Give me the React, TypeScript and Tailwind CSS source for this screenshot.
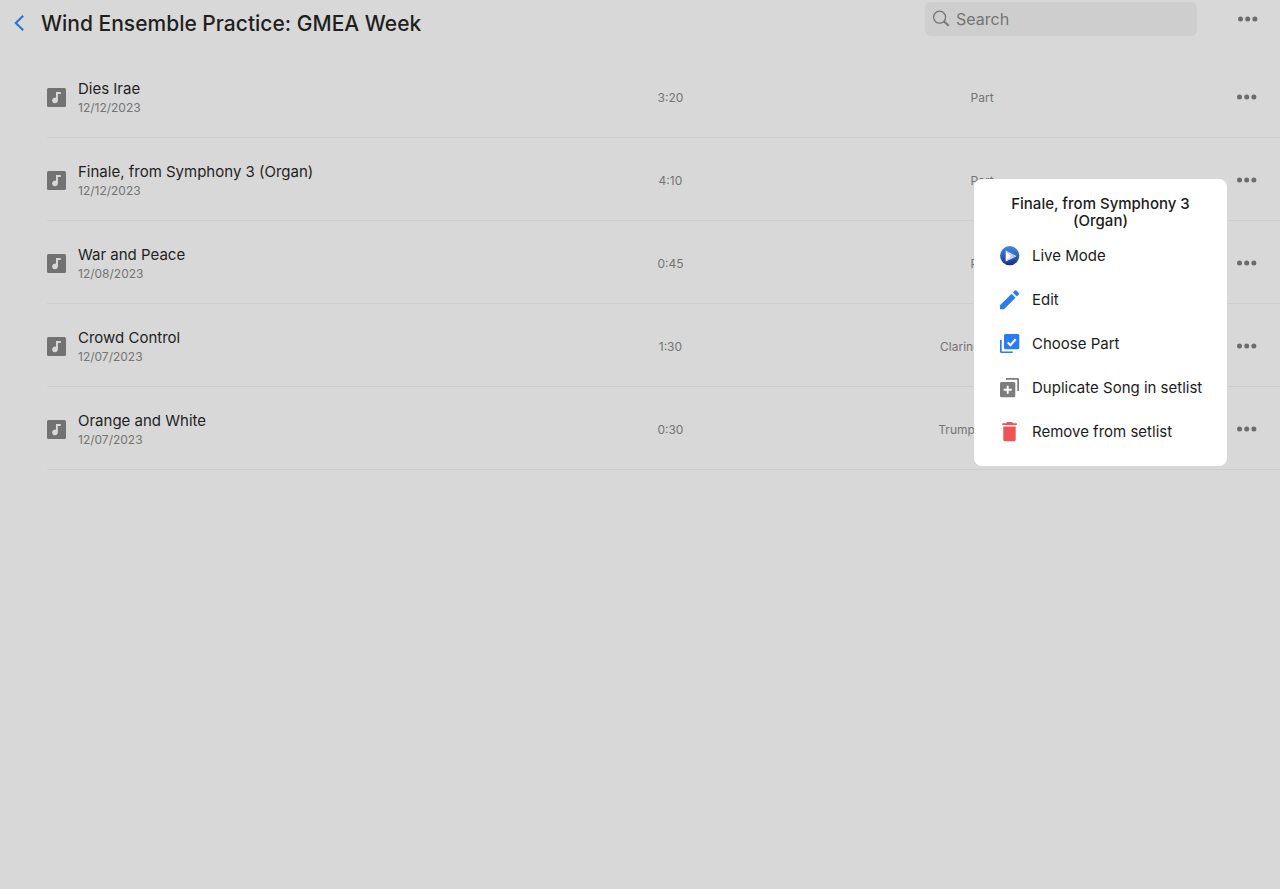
import { useState } from "react";

const songs = [
  { id: 1, title: "Dies Irae", date: "12/12/2023", duration: "3:20", part: "Part" },
  { id: 2, title: "Finale, from Symphony 3 (Organ)", date: "12/12/2023", duration: "4:10", part: "Part" },
  { id: 3, title: "War and Peace", date: "12/08/2023", duration: "0:45", part: "Part" },
  { id: 4, title: "Crowd Control", date: "12/07/2023", duration: "1:30", part: "Clarinet in Bb 1" },
  { id: 5, title: "Orange and White", date: "12/07/2023", duration: "0:30", part: "Trumpet in Bb 1" },
];

function BackIcon() {
  return (
    <svg width="10" height="16" viewBox="0 0 10 16" fill="none" stroke="#2a6fd6" strokeWidth="2">
      <path d="M9.2 0.8 1.8 8l7.4 7.2" />
    </svg>
  );
}

function SearchIcon() {
  return (
    <svg width="18" height="18" viewBox="0 0 18 18" fill="none" stroke="#747474">
      <circle cx="6.6" cy="7.2" r="6" strokeWidth="1.3" />
      <path d="m11 11.4 4.6 4.4" strokeWidth="2" />
    </svg>
  );
}

function DotsIcon() {
  return (
    <svg width="20" height="6" viewBox="0 0 20 6" fill="#6c6c6c">
      <circle cx="2.5" cy="3" r="2.5" />
      <circle cx="9.7" cy="3" r="2.5" />
      <circle cx="16.9" cy="3" r="2.5" />
    </svg>
  );
}

function SongIcon() {
  return (
    <svg className="shrink-0" width="19" height="19" viewBox="0 0 19 19">
      <rect width="19" height="19" rx="1.5" fill="#727272" />
      <path d="M9 4h4.8v2.1h-2.9v6.2a2.9 2.9 0 1 1-1.9-2.6z" fill="#d8d8d8" />
    </svg>
  );
}

function LiveIcon() {
  return (
    <svg width="20" height="20" viewBox="0 0 20 20">
      <defs>
        <linearGradient id="live" x1="0" y1="0" x2="0" y2="1">
          <stop offset="0" stopColor="#4186e6" />
          <stop offset="0.5" stopColor="#3462bd" />
          <stop offset="1" stopColor="#142c88" />
        </linearGradient>
      </defs>
      <circle cx="9.7" cy="9.7" r="9.6" fill="url(#live)" />
      <path d="M5.6 4.9 16 10.2 5.6 15.2z" fill="#8fa9dc" />
      <path d="m5.9 5.2 5.4 5-5.4 4.8z" fill="#fff" />
      <path d="m5.8 5 10 5.2-10 4.9M9 7l3.6 3.2L9 13.2" fill="none" stroke="#fff" strokeWidth="0.7" />
    </svg>
  );
}

function EditIcon() {
  return (
    <svg width="20" height="20" viewBox="0 0 20 20" fill="#2a7df0">
      <path d="M0 15.3 11.6 3.8l3.9 3.9L4 19.3H0z" />
      <path d="m12.9 2.5 1.9-1.9a1.1 1.1 0 0 1 1.6 0L18.8 3a1.1 1.1 0 0 1 0 1.6l-1.9 1.8z" />
    </svg>
  );
}

function ChooseIcon() {
  return (
    <svg width="20" height="20" viewBox="0 0 20 20">
      <path d="M0 6h1.7v11.5h11V19H1.2A1.2 1.2 0 0 1 0 17.8z" fill="#2a7df0" />
      <rect x="4" y="0" width="15.3" height="15.3" rx="1.5" fill="#2a7df0" />
      <path d="m7.7 8.5 2.8 2.7 5.2-6" fill="none" stroke="#fff" strokeWidth="2" />
    </svg>
  );
}

function DuplicateIcon() {
  return (
    <svg width="20" height="20" viewBox="0 0 20 20">
      <path d="M6 0h11.8A1.2 1.2 0 0 1 19 1.2V13h-1.7V1.7H6z" fill="#7d7d7d" />
      <rect x="0" y="4" width="15.3" height="15.3" rx="1.5" fill="#7d7d7d" />
      <path d="M7.7 7.7v8M3.7 11.7h8" fill="none" stroke="#fff" strokeWidth="1.9" />
    </svg>
  );
}

function RemoveIcon() {
  return (
    <svg width="20" height="20" viewBox="0 0 20 20" fill="#ef5353">
      <path d="M2.3 1.2H6L7 0h5l1 1.2h3.8v1.9H2.3z" />
      <path d="M3.3 4.6h12.4v12.8a1.9 1.9 0 0 1-1.9 1.9H5.2a1.9 1.9 0 0 1-1.9-1.9z" />
    </svg>
  );
}

const actions = [
  { label: "Live Mode", icon: <LiveIcon /> },
  { label: "Edit", icon: <EditIcon /> },
  { label: "Choose Part", icon: <ChooseIcon /> },
  { label: "Duplicate Song in setlist", icon: <DuplicateIcon /> },
  { label: "Remove from setlist", icon: <RemoveIcon /> },
];

function SongMenu({ title, onClose }: { title: string; onClose: () => void }) {
  return (
    <div className="absolute top-[41px] right-[53px] z-10 w-[253px] rounded-lg bg-white pt-4 pb-3">
      <h2 className="mb-[5px] px-6 text-center text-[15px] leading-[17px] font-medium text-[#1c1c1c]">{title}</h2>
      {actions.map((action) => (
        <button
          key={action.label}
          className="flex h-11 w-full items-center gap-3 pl-[26px] text-left text-[15px] whitespace-nowrap text-[#1c1c1c]"
          onClick={onClose}
        >
          {action.icon}
          {action.label}
        </button>
      ))}
    </div>
  );
}

export default function App() {
  const [search, setSearch] = useState("");
  const [openId, setOpenId] = useState<number | null>(2);

  const visible = songs.filter((song) => song.title.toLowerCase().includes(search.toLowerCase()));

  return (
    <div className="min-h-screen bg-[#d8d8d8] font-[Inter,sans-serif] text-[#1f1f1f]">
      <header className="flex h-[55px] items-start">
        <button className="flex h-[46px] w-[41px] items-center pl-[14px]" aria-label="Back">
          <BackIcon />
        </button>
        <h1 className="flex-1 text-[21px] leading-[48px] font-medium">Wind Ensemble Practice: GMEA Week</h1>
        <label className="mt-[2px] flex h-[34px] w-[272px] items-center gap-[5px] rounded-md bg-[#cecece] pl-2">
          <SearchIcon />
          <input
            className="min-w-0 flex-1 bg-transparent text-base outline-none placeholder:text-[#747474]"
            aria-label="Search"
            placeholder="Search"
            value={search}
            onChange={(e) => setSearch(e.target.value)}
          />
        </label>
        <button className="mr-[22px] ml-[41px] flex h-[38px] items-center" aria-label="Setlist options">
          <DotsIcon />
        </button>
      </header>
      <ul className="pl-[47px]">
        {visible.map((song) => (
          <li
            key={song.id}
            className="relative grid h-[83px] grid-cols-[3fr_2fr_2fr_142px] items-center border-b border-[#cdcdcd] pt-[2px]"
          >
            <div className="flex items-center gap-3">
              <SongIcon />
              <div className="pt-[2px]">
                <p className="text-[15px] leading-5">{song.title}</p>
                <p className="text-xs leading-[18px] text-[#747474]">{song.date}</p>
              </div>
            </div>
            <p className="pt-[2px] text-center text-xs text-[#747474]">{song.duration}</p>
            <p className="pt-[2px] text-center text-xs text-[#747474]">{song.part}</p>
            <button
              className="mr-[23px] flex h-6 items-center justify-self-end"
              aria-label={`Options for ${song.title}`}
              onClick={() => setOpenId(openId === song.id ? null : song.id)}
            >
              <DotsIcon />
            </button>
            {openId === song.id && <SongMenu title={song.title} onClose={() => setOpenId(null)} />}
          </li>
        ))}
      </ul>
    </div>
  );
}
